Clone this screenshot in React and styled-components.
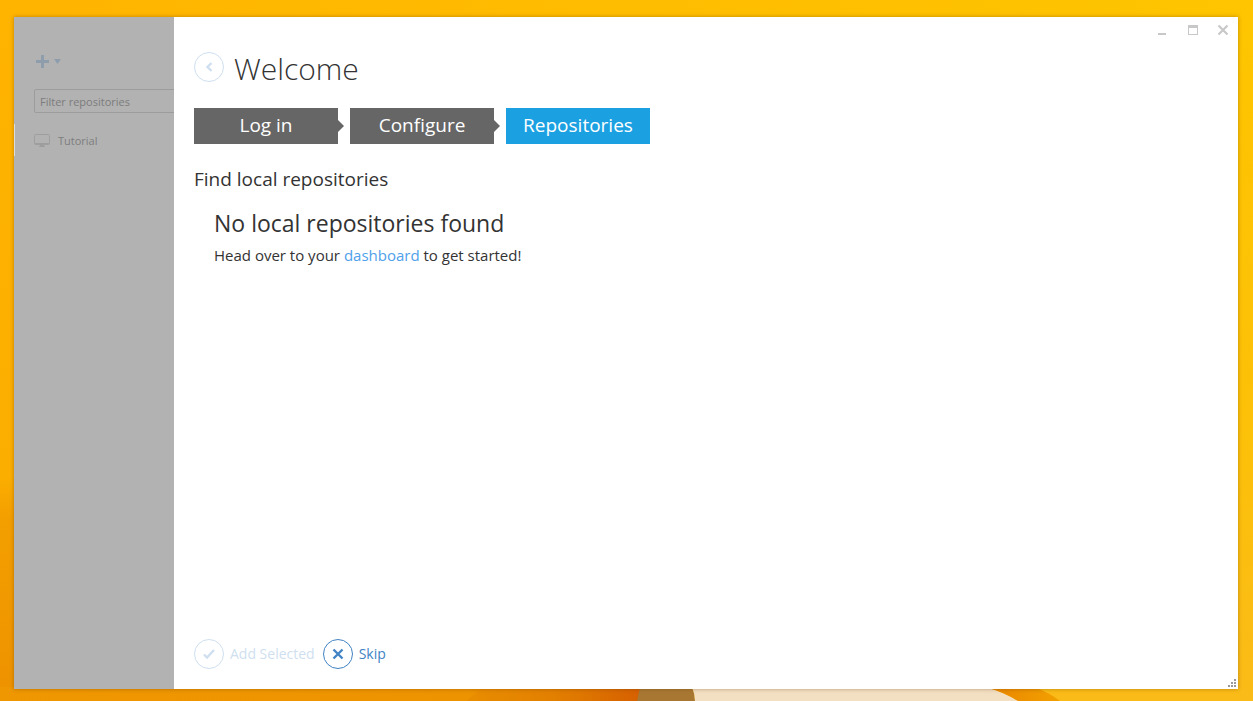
import React from "react";
import styled, { createGlobalStyle } from "styled-components";

const GlobalStyle = createGlobalStyle`
  *, *::before, *::after { box-sizing: border-box; }
  body {
    margin: 0;
    font-family: "Open Sans", "Noto Sans", sans-serif;
    color: #333;
  }
  button, input { font: inherit; }
  h1, h2, h3, p, ol, ul { margin: 0; padding: 0; font-weight: 400; }
`;

const Desktop = styled.div`
  position: relative;
  z-index: 0;
  display: flex;
  min-height: 100vh;
  padding: 17px 15px 12px 14px;
  background:
    linear-gradient(to bottom, #ffb400 0%, #fcae00 68%, #f39f00 74%, #ee9200 100%) left / 50% 100% no-repeat,
    linear-gradient(to bottom, #fec500 0%, #fcc108 60%, #fabb18 100%);
`;

const TopGlow = styled.div`
  position: absolute;
  z-index: -1;
  inset: 0 0 auto;
  height: 20px;
  background: linear-gradient(to right, #ffb400, #fec500);
`;

const Wallpaper = styled.svg`
  position: absolute;
  z-index: -1;
  left: 0;
  bottom: 0;
  width: 100%;
  height: 14px;
`;

const Window = styled.div`
  display: flex;
  flex: 1;
  min-width: 0;
  background: #fff;
  box-shadow: 0 0 4px rgba(90, 50, 0, 0.4);
`;

const Sidebar = styled.aside`
  flex: none;
  width: 160px;
  padding-top: 37px;
  overflow: hidden;
  background: #b2b2b2;
`;

const AddButton = styled.button`
  display: flex;
  align-items: center;
  gap: 4px;
  height: 15px;
  margin-left: 22px;
  padding: 0;
  border: 0;
  background: none;
  color: #8e9dac;
`;

const FilterInput = styled.input`
  display: block;
  width: 200px;
  height: 24px;
  margin: 20px 0 11px 20px;
  padding: 0 5px;
  border: 1px solid #9c9c9c;
  border-radius: 2px;
  background: transparent;
  font-size: 11px;
  color: #7c7c7c;
  outline: none;
  &::placeholder { color: #7c7c7c; opacity: 1; }
`;

const RepoItem = styled.li`
  display: flex;
  align-items: center;
  gap: 8px;
  height: 32px;
  padding-left: 19px;
  border-left: 1px solid #dcdcdc;
  font-size: 11px;
  color: #7e7e7e;
  list-style: none;
`;

const Panel = styled.main`
  position: relative;
  display: flex;
  flex: 1;
  flex-direction: column;
  min-width: 0;
  padding: 32px 20px 20px;
`;

const WindowControls = styled.div`
  position: absolute;
  top: 6px;
  right: 8px;
  display: flex;
  gap: 16px;
`;

const WindowButton = styled.button`
  width: 14px;
  height: 14px;
  padding: 0;
  border: 0;
  background: none;
  color: #c8c8c8;
  svg { display: block; }
`;

const Header = styled.header`
  display: flex;
  align-items: center;
  gap: 10px;
  height: 36px;
`;

const Title = styled.h1`
  && {
    padding-top: 4px;
    font-weight: 300;
  }
  font-size: 30px;
  line-height: 36px;
`;

const Circle = styled.span`
  display: grid;
  flex: none;
  place-items: center;
  width: 30px;
  height: 30px;
  border: 1px solid currentColor;
  border-radius: 50%;
`;

const RoundButton = styled.button`
  display: flex;
  align-items: center;
  gap: 6px;
  padding: 0;
  border: 0;
  background: none;
  font-size: 14px;
  line-height: 30px;
  color: ${(p) => (p.disabled ? "#cfdff0" : "#4183c4")};
`;

const Steps = styled.ol`
  display: flex;
  gap: 12px;
  margin-top: 23px;
  list-style: none;
`;

const Step = styled.li`
  position: relative;
  width: 144px;
  height: 36px;
  background: ${(p) => (p.$current ? "#1ba1e2" : "#666")};
  color: #fff;
  font-size: 19px;
  line-height: 34px;
  text-align: center;

  &:not(:last-child)::after {
    content: "";
    position: absolute;
    top: 12px;
    left: 100%;
    border: 6px solid transparent;
    border-left-color: #666;
    border-right-width: 0;
  }
`;

const SectionTitle = styled.h2`
  margin-top: 20px;
  font-size: 19px;
  line-height: 30px;
`;

const EmptyState = styled.section`
  flex: 1;
  padding: 11px 20px;
`;

const EmptyTitle = styled.h3`
  font-size: 23px;
  line-height: 36px;
`;

const EmptyText = styled.p`
  font-size: 15px;
  line-height: 28px;
`;

const Link = styled.a`
  color: #4ea1ea;
  text-decoration: none;
`;

const Footer = styled.footer`
  display: flex;
  gap: 8px;
`;

const ResizeGrip = styled.svg`
  position: absolute;
  right: 2px;
  bottom: 2px;
`;

const GRIP_DOTS = [[6, 0], [3, 3], [6, 3], [0, 6], [3, 6], [6, 6]];

export default function App() {
  return (
    <Desktop>
      <GlobalStyle />
      <TopGlow />
      <Wallpaper viewBox="0 0 1253 14" preserveAspectRatio="none" aria-hidden="true">
        <defs>
          <linearGradient id="ember" x1="0" x2="1" y1="0" y2="0">
            <stop offset="0" stopColor="#ef9700" />
            <stop offset="0.73" stopColor="#ed9300" />
            <stop offset="0.9" stopColor="#df7800" />
            <stop offset="1" stopColor="#d66000" />
          </linearGradient>
          <linearGradient id="ray" x1="0" x2="1" y1="0" y2="0">
            <stop offset="0" stopColor="#e98500" />
            <stop offset="1" stopColor="#f2a000" />
          </linearGradient>
        </defs>
        <rect width="640" height="14" fill="url(#ember)" />
        <path d="M484 0H560V14H466Z" fill="#e38300" opacity="0.35" />
        <path d="M640 0H692Q695 7 695 14H637Z" fill="#a87833" />
        <path d="M692 0H985Q1004 5 1018 14H695Q695 7 692 0Z" fill="#f3dfc2" />
        <path d="M985 0H1034Q1050 6 1060 14H1018Q1004 5 985 0Z" fill="url(#ray)" />
      </Wallpaper>

      <Window>
        <Sidebar>
          <AddButton type="button" aria-label="Add repository">
            <svg width="14" height="15" viewBox="0 0 14 15" fill="currentColor">
              <path d="M5 1h3v5h5v3H8v5H5V9H0V6h5z" />
            </svg>
            <svg width="7" height="5" viewBox="0 0 7 5" fill="currentColor">
              <path d="M0 0h7L3.500 5z" />
            </svg>
          </AddButton>
          <FilterInput type="text" aria-label="Filter repositories" placeholder="Filter repositories" />
          <ul>
            <RepoItem>
              <svg width="16" height="13" viewBox="0 0 16 13" fill="none">
                <rect x="0.500" y="0.500" width="15" height="10" rx="1" stroke="#9e9e9e" />
                <path d="M1 9.500h14M6 11.500h4M5 12.500h6" stroke="#9e9e9e" />
              </svg>
              Tutorial
            </RepoItem>
          </ul>
        </Sidebar>

        <Panel>
          <WindowControls>
            <WindowButton type="button" aria-label="Minimize">
              <svg width="14" height="14" viewBox="0 0 14 14" fill="currentColor">
                <path d="M2 10h8v2H2z" />
              </svg>
            </WindowButton>
            <WindowButton type="button" aria-label="Maximize">
              <svg width="14" height="14" viewBox="0 0 14 14" fill="currentColor">
                <path fillRule="evenodd" d="M2 2h10v10H2zM3 5v6h8V5z" />
              </svg>
            </WindowButton>
            <WindowButton type="button" aria-label="Close">
              <svg width="14" height="14" viewBox="0 0 14 14" stroke="currentColor" strokeWidth="2.200">
                <path d="M2.500 2.500l9 9M11.500 2.500l-9 9" />
              </svg>
            </WindowButton>
          </WindowControls>

          <Header>
            <RoundButton type="button" disabled aria-label="Back">
              <Circle>
                <svg width="12" height="12" viewBox="0 0 12 12" fill="none" stroke="currentColor" strokeWidth="2.400">
                  <path d="M8.500 2L4.500 6l4 4" />
                </svg>
              </Circle>
            </RoundButton>
            <Title>Welcome</Title>
          </Header>

          <Steps>
            <Step>Log in</Step>
            <Step>Configure</Step>
            <Step $current aria-current="step">Repositories</Step>
          </Steps>

          <SectionTitle>Find local repositories</SectionTitle>
          <EmptyState>
            <EmptyTitle>No local repositories found</EmptyTitle>
            <EmptyText>
              Head over to your <Link href="#dashboard">dashboard</Link> to get started!
            </EmptyText>
          </EmptyState>

          <Footer>
            <RoundButton type="button" disabled>
              <Circle>
                <svg width="12" height="12" viewBox="0 0 12 12" fill="none" stroke="currentColor" strokeWidth="2.400">
                  <path d="M1 6.500l3 3 7-7.500" />
                </svg>
              </Circle>
              Add Selected
            </RoundButton>
            <RoundButton type="button">
              <Circle>
                <svg width="12" height="12" viewBox="0 0 12 12" fill="none" stroke="currentColor" strokeWidth="2.400">
                  <path d="M1.500 1.500l9 9M10.500 1.500l-9 9" />
                </svg>
              </Circle>
              Skip
            </RoundButton>
          </Footer>

          <ResizeGrip width="8" height="8" viewBox="0 0 8 8" aria-hidden="true">
            {GRIP_DOTS.map(([x, y]) => (
              <rect key={`${x}-${y}`} x={x} y={y} width="2" height="2" fill="#999" />
            ))}
          </ResizeGrip>
        </Panel>
      </Window>
    </Desktop>
  );
}
